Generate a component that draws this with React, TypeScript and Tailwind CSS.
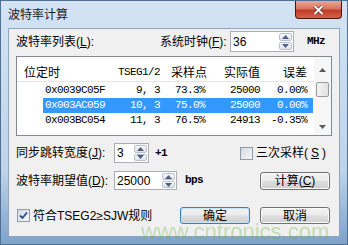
import React from "react";

const ui = "font-['Liberation_Sans','Noto_Sans_CJK_SC',sans-serif]";
const mono = "font-['Liberation_Mono','Noto_Sans_CJK_SC',monospace] text-[11px] tracking-[-0.6px]";

// row data for the baud rate list
interface Rate {
  btr: string;
  tseg: string;
  sample: string;
  actual: string;
  error: string;
}

const rates: Rate[] = [
  { btr: "0x0039C05F", tseg: "9, 3", sample: "73.3%", actual: "25000", error: "0.00%" },
  { btr: "0x003AC059", tseg: "10, 3", sample: "75.0%", actual: "25000", error: "0.00%" },
  { btr: "0x003BC054", tseg: "11, 3", sample: "76.5%", actual: "24913", error: "-0.35%" },
];

function Tri({ up, color = "#4d6185" }: { up?: boolean; color?: string }) {
  return (
    <svg width="7" height="4" viewBox="0 0 7 4">
      <path d={up ? "M0 4 L3.5 0 L7 4 Z" : "M0 0 L3.5 4 L7 0 Z"} fill={color} />
    </svg>
  );
}

function Spin() {
  return (
    <div className="flex w-[14px] flex-col gap-px py-px pr-px">
      <div className="flex flex-1 items-center justify-center rounded-[2px] border border-[#b9c1cc] bg-[linear-gradient(#f7f8fa,#dfe3e9)]">
        <Tri up />
      </div>
      <div className="flex flex-1 items-center justify-center rounded-[2px] border border-[#b9c1cc] bg-[linear-gradient(#f7f8fa,#dfe3e9)]">
        <Tri />
      </div>
    </div>
  );
}

function SpinBox({ value, width }: { value: string; width: string }) {
  return (
    <div className={`flex h-full border border-[#abadb3] bg-white ${width}`}>
      <span className="flex flex-1 items-center pl-[2px] text-[12px] text-black">{value}</span>
      <Spin />
    </div>
  );
}

function Check({ on }: { on?: boolean }) {
  return (
    <span className="flex h-[13px] w-[13px] shrink-0 items-center justify-center border border-[#8f9aa8] bg-[linear-gradient(135deg,#d6d9de,#f8f8f8)]">
      {on && (
        <svg width="9" height="9" viewBox="0 0 9 9">
          <path d="M1 4.5 L3.5 7 L8 1.5" fill="none" stroke="#2b4a8c" strokeWidth="1.8" />
        </svg>
      )}
    </span>
  );
}

function Btn({ children, primary }: { children: React.ReactNode; primary?: boolean }) {
  return (
    <button
      className={`h-full w-[70px] rounded-[3px] border bg-[linear-gradient(#f2f2f2,#ebebeb_48%,#dddddd_52%,#cfcfcf)] text-[12px] leading-none text-black ${
        primary ? "border-[#3c7fb1] shadow-[inset_0_0_0_1px_#c4e5f6]" : "border-[#707070] shadow-[inset_0_0_0_1px_#fbfbfb]"
      }`}
    >
      {children}
    </button>
  );
}

function Key({ k }: { k: string }) {
  return (
    <>
      (<span className="underline underline-offset-[1px]">{k}</span>):
    </>
  );
}

export default function App() {
  return (
    <div
      className={`relative flex h-[245px] w-[348px] flex-col overflow-hidden border border-[#4f6f93] bg-[linear-gradient(#d3e3f3,#bdd3ea_70%,#7da2c9)] ${ui}`}
    >
      {/* title bar */}
      <div className="flex h-[27px] items-start justify-between">
        <span className="pl-[7px] pt-[5px] text-[12px] text-[#1b1b1b]">波特率计算</span>
        <div className="mr-[5px] flex h-[18px] w-[47px] items-center justify-center rounded-b-[4px] border border-t-0 border-[#4a1710] bg-[linear-gradient(#eaa89a,#d67561_45%,#c23c29_55%,#d4624c)]">
          <svg width="11" height="10" viewBox="0 0 11 10">
            <path d="M1.5 1 L9.5 9 M9.5 1 L1.5 9" stroke="#5a2018" strokeWidth="3.2" />
            <path d="M1.5 1 L9.5 9 M9.5 1 L1.5 9" stroke="#ffffff" strokeWidth="2" />
          </svg>
        </div>
      </div>

      {/* client area */}
      <div className="mx-[7px] flex-1 border border-[#8ea6c0] bg-[#f0f0f0] px-[7px] text-[12px] text-black">
        <div className="mt-[2px] flex h-[21px] items-center">
          <span className="w-[144px]">
            波特率列表<Key k="L" />
          </span>
          <span className="w-[70px]">
            系统时钟<Key k="F" />
          </span>
          <SpinBox value="36" width="w-[64px]" />
          <span className={`ml-[13px] font-bold ${mono}`}>MHz</span>
        </div>

        {/* list */}
        <div className="mt-[4px] flex h-[80px] border border-[#828790] bg-white">
          <div className="flex-1">
            <div className="flex h-[25px] items-center border-b border-[#e5e5e5] pt-[7px]">
              <span className="w-[93px] pl-[7px]">位定时</span>
              <span className={`w-[53px] pr-[3px] text-right ${mono}`}>TSEG1/2</span>
              <span className="w-[47px] pr-[3px] text-right">采样点</span>
              <span className="w-[53px] pr-[3px] text-right">实际值</span>
              <span className="w-[49px] pr-[5px] text-right">误差</span>
            </div>
            <div className="mt-[1px]">
              {rates.map((r, i) => (
                <div key={r.btr} className="flex h-[15px] pl-[26px]">
                  <div
                    className={`flex w-[270px] items-center ${mono} ${
                      i === 1 ? "bg-[#3399ff] text-white" : "text-black"
                    }`}
                  >
                    <span className="w-[67px] pl-[2px]">{r.btr}</span>
                    <span className="w-[53px] pr-[3px] text-right">{r.tseg}</span>
                    <span className="w-[47px] pr-[5px] text-right">{r.sample}</span>
                    <span className="w-[53px] pr-[3px] text-right">{r.actual}</span>
                    <span className="w-[50px] pr-[6px] text-right">{r.error}</span>
                  </div>
                </div>
              ))}
            </div>
          </div>
          {/* scrollbar */}
          <div className="flex w-[17px] flex-col bg-[#f6f6f6]">
            <div className="flex h-[24px] items-center justify-center pt-[1px]">
              <Tri up color="#5a5a5a" />
            </div>
            <div className="mx-[2px] mt-[1px] h-[15px] rounded-[2px] border border-[#9a9a9a] bg-[linear-gradient(90deg,#f3f3f3,#e2e2e2)]" />
            <div className="flex-1" />
            <div className="flex h-[17px] items-center justify-center">
              <Tri color="#5a5a5a" />
            </div>
          </div>
        </div>

        <div className="mt-[7px] flex h-[20px] items-center">
          <span className="w-[98px]">
            同步跳转宽度<Key k="J" />
          </span>
          <SpinBox value="3" width="w-[35px]" />
          <span className={`ml-[6px] font-bold ${mono}`}>+1</span>
          <span className="ml-auto mr-[6px] flex items-center gap-[3px]">
            <Check />
            三次采样(<span className="underline underline-offset-[1px]">S</span>)
          </span>
        </div>

        <div className="mt-[8px] flex h-[19px] items-center">
          <span className="w-[98px]">
            波特率期望值<Key k="D" />
          </span>
          <SpinBox value="25000" width="w-[63px]" />
          <span className={`ml-[8px] font-bold ${mono}`}>bps</span>
          <span className="ml-auto mr-[2px] h-[18px]">
            <Btn>
              计算(<span className="underline underline-offset-[1px]">C</span>)
            </Btn>
          </span>
        </div>

        <div className="mt-[17px] flex h-[17px] items-center">
          <span className="flex items-center gap-[3px] pl-[1px]">
            <Check on />
            符合TSEG2≥SJW规则
          </span>
          <span className="ml-auto flex h-full gap-[10px] pr-[2px]">
            <Btn primary>确定</Btn>
            <Btn>取消</Btn>
          </span>
        </div>
      </div>
      <div className="h-[7px]" />

      {/* watermark */}
      <span className="pointer-events-none absolute left-[140px] top-[224px] font-['Liberation_Sans',sans-serif] text-[22px] leading-[14px] text-[rgba(110,180,70,0.35)]">
        www.cntronics.com
      </span>
    </div>
  );
}
